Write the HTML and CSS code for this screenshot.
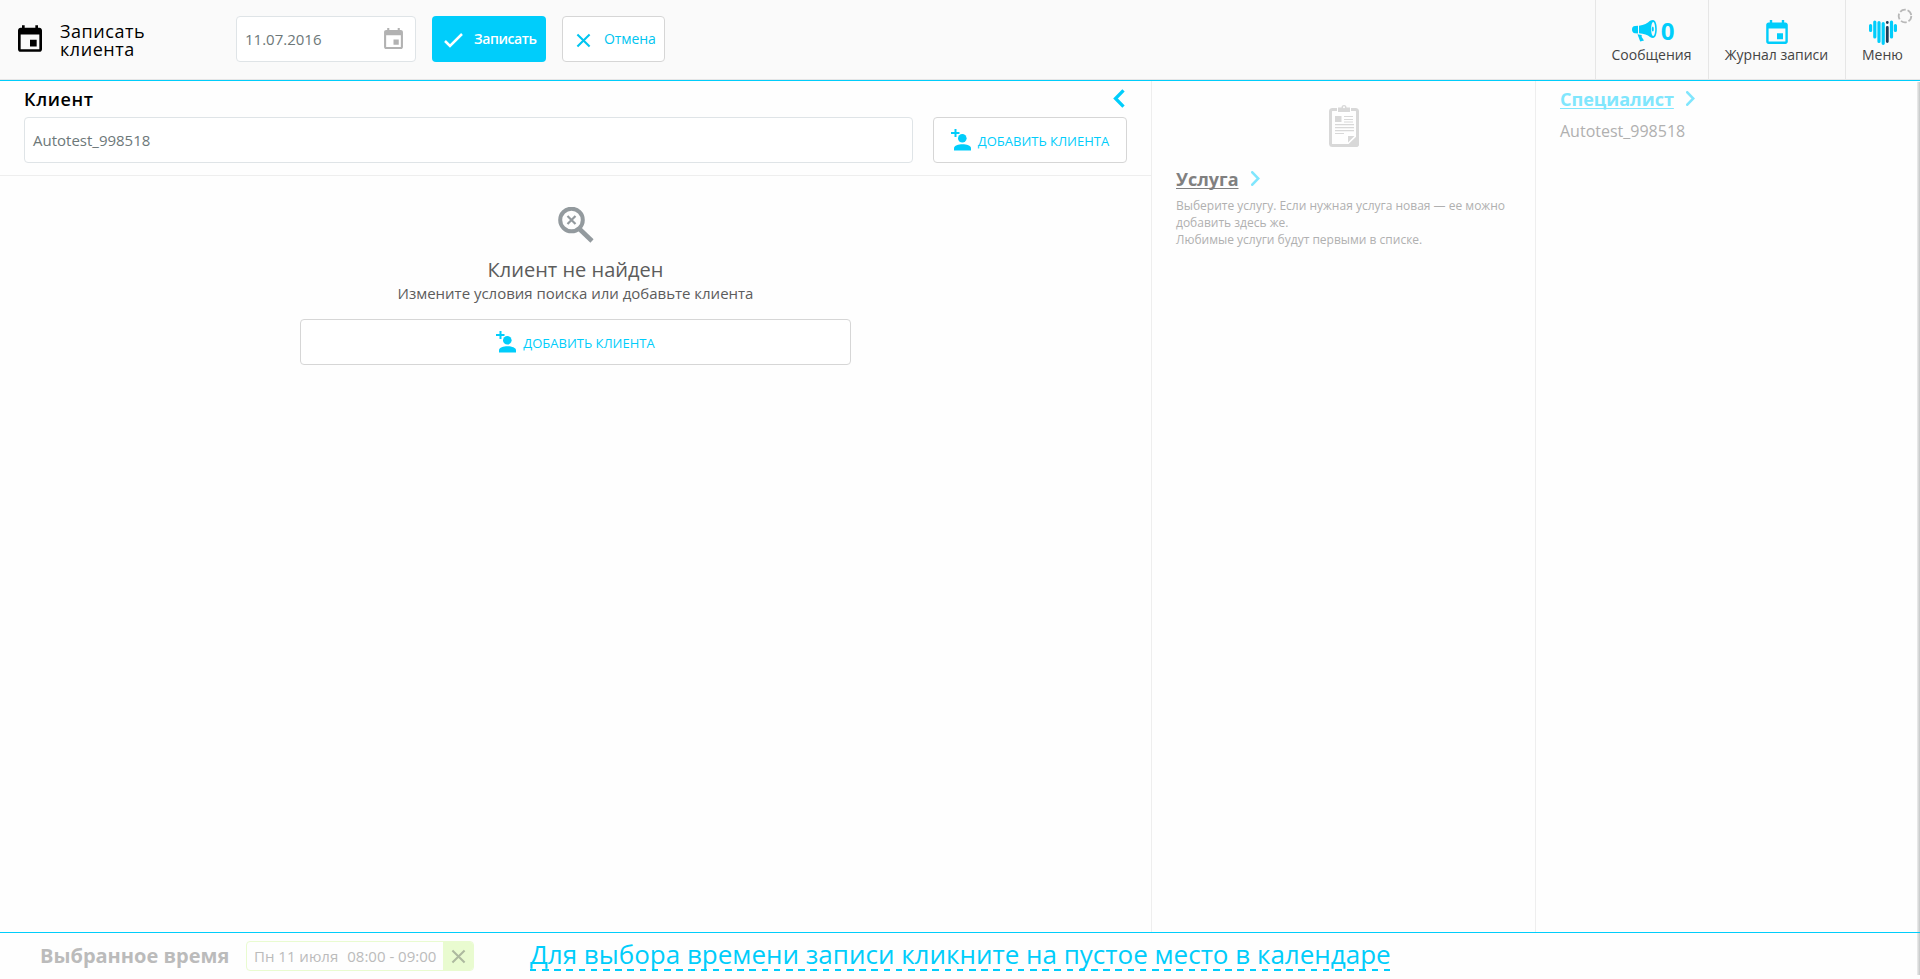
FILE: index.html
```html
<!DOCTYPE html>
<html lang="ru">
<head>
<meta charset="utf-8">
<title>Записать клиента</title>
<link rel="stylesheet" href="styles.css">
</head>
<body>
<svg class="sprite" width="0" height="0">
  <symbol id="event" viewBox="3 1 18 20"><path d="M17 12h-5v5h5v-5zM16 1v2H8V1H6v2H5c-1.110 0-1.990.9-1.990 2L3 19c0 1.100.89 2 2 2h14c1.100 0 2-.9 2-2V5c0-1.100-.9-2-2-2h-1V1h-2zm3 18H5V8h14v11z"/></symbol>
  <symbol id="person-add" viewBox="0 0 20 22"><path d="M3.500 0h2v3h3v2h-3v3h-2V5H0V3h3.500z"/><circle cx="11.300" cy="9.300" r="4.300"/><path d="M3 21.500v-2.200c0-2.600 4.500-4 8.500-4s8.500 1.400 8.500 4v2.200z"/></symbol>
  <symbol id="chevron" viewBox="0 0 9 15"><path d="M1.300 1.300 7.300 7.500 1.300 13.700" fill="none" stroke="currentColor" stroke-width="2.600" stroke-linecap="round"/></symbol>
  <symbol id="cross" viewBox="0 0 16 16"><path d="M1.500 1.500 14.500 14.500M14.500 1.500 1.500 14.500" fill="none" stroke="currentColor" stroke-width="2.200"/></symbol>
</svg>
<div class="page">
  <header class="header">
    <svg class="title-icon"><use href="#event"/></svg>
    <h1 class="title">Записать<br>клиента</h1>
    <div class="date"><span>11.07.2016</span><svg class="date-icon"><use href="#event"/></svg></div>
    <button class="btn save"><svg width="19" height="15" viewBox="0 0 19 15"><path d="M1 8l5 5L18 1" fill="none" stroke="#fff" stroke-width="2.500"/></svg><span>Записать</span></button>
    <button class="btn cancel"><svg width="15" height="15"><use href="#cross"/></svg><span>Отмена</span></button>
    <nav class="nav">
      <a class="nav-item messages"><span class="nav-icon">
        <svg width="25" height="22" viewBox="0 0 25 22"><path fill-rule="evenodd" d="M0 9.500C0 7.500 1 6 3 6l3-.2v7.600l-3-.2c-2 0-3-1.700-3-3.700zM7 5.700C12 5 15.500 3.500 18 .8 19 .2 20 0 21 0c2.500 0 3.800 4 3.800 9s-1.300 9-3.800 9c-1 0-2-.3-3-1-2.500-2-6-3.300-11-3.700zM21.200 2c-1.100 0-2 3-2 7s.9 7 2 7 2-3 2-7-.9-7-2-7zM5.500 14.300l4.200.6v2l2.300 3.600-3.800 1z"/><ellipse cx="20.800" cy="9" rx="1" ry="2.500"/></svg>
        <b class="count">0</b></span><span>Сообщения</span></a>
      <a class="nav-item journal"><span class="nav-icon"><svg width="22" height="24"><use href="#event"/></svg></span><span>Журнал записи</span></a>
      <a class="nav-item menu"><span class="nav-icon"><svg width="28" height="25" viewBox="0 0 28 25" fill="none" stroke="#00cdfb" stroke-width="3.200" stroke-linecap="round"><path d="M1.600 5.500v5M5.800 2v15M10 2.500v19M14.200 3.500v19.800M22.500 2v15M26.400 5.500v5"/><path d="M18.300 7.500v14M18.300 2.400v.1" stroke="#1d3b57" stroke-width="2.800"/></svg></span><span>Меню</span>
        <svg class="spinner" viewBox="0 0 16 16"><circle cx="8" cy="8" r="6.300"/></svg></a>
    </nav>
  </header>
  <main class="main">
    <section class="client">
      <div class="search">
        <div class="search-head"><h2 class="heading">Клиент</h2>
          <svg class="back" viewBox="0 0 12 19"><path d="M10.500 1.300 2.500 9.500l8 8.200" fill="none" stroke="currentColor" stroke-width="3.300"/></svg></div>
        <div class="search-row"><div class="field">Autotest_998518</div>
          <button class="add"><svg width="20" height="22"><use href="#person-add"/></svg><span>ДОБАВИТЬ КЛИЕНТА</span></button></div>
      </div>
      <div class="empty">
        <svg class="empty-icon" viewBox="0 0 36 36"><circle cx="13.500" cy="13" r="11.300" stroke-width="4"/><path d="M21.500 22 34 34" stroke-width="4.600"/><path d="M9.500 9l8 8m0-8-8 8" stroke-width="2.200"/></svg>
        <div class="empty-title">Клиент не найден</div>
        <div class="empty-text">Измените условия поиска или добавьте клиента</div>
        <button class="add wide"><svg width="20" height="22"><use href="#person-add"/></svg><span>ДОБАВИТЬ КЛИЕНТА</span></button>
      </div>
    </section>
    <section class="service">
      <svg class="clipboard" viewBox="0 0 30 42"><rect x="1.500" y="4.500" width="27" height="36" rx="2" fill="none" stroke="#d8d8d8" stroke-width="3"/><path d="M8 2h14v6H8z" fill="#fff"/><path d="M9 2.500h3.500a2.500 2.500 0 0 1 5 0H21V7H9z" fill="#d8d8d8"/><circle cx="15" cy="2.200" r="1" fill="#fff"/><path d="M6 11h6.500v6H6z" fill="#d8d8d8"/><path d="M15 11.500h9M15 14.500h9M15 17h9M6 19.700h19M6 22.700h19M6 25.700h19M6 28.500h9" fill="none" stroke="#d8d8d8" stroke-width="1.200"/><path d="M18 39v-9h9v9z" fill="#fff"/><path d="M19 31h6.500L19 37.500zM30 29v10q0 3-3 3h-9v-1.500z" fill="#d8d8d8"/></svg>
      <div class="step"><span class="step-name dark">Услуга</span><svg class="arrow"><use href="#chevron"/></svg></div>
      <p class="hint">Выберите услугу. Если нужная услуга новая — ее можно добавить здесь же.<br>Любимые услуги будут первыми в списке.</p>
    </section>
    <section class="specialist">
      <div class="step"><span class="step-name">Специалист</span><svg class="arrow"><use href="#chevron"/></svg></div>
      <div class="specialist-name">Autotest_998518</div>
    </section>
  </main>
  <footer class="footer">
    <b class="chosen">Выбранное время</b>
    <div class="slot"><span class="slot-text"><span>Пн 11 июля</span><span>08:00 - 09:00</span></span><span class="slot-close"><svg width="15" height="15"><use href="#cross"/></svg></span></div>
    <a class="pick">Для выбора времени записи кликните на пустое место в календаре</a>
  </footer>
  <div class="side-shadow"></div>
</div>
</body>
</html>
```
FILE: styles.css
```css
* { box-sizing: border-box; }
body { margin: 0; background: #fefefe; font-family: "Open Sans", sans-serif; color: #000; }
h1, h2, p { margin: 0; }
svg { fill: currentColor; flex: none; display: block; }
.sprite { position: absolute; }
button { font: inherit; cursor: pointer; }
.page { position: relative; width: 100%; height: 979px; display: flex; flex-direction: column; overflow: hidden; }

.header { height: 81px; flex: none; display: flex; align-items: flex-start; background: #fafafa; border-bottom: 1px solid #00cdfb; box-shadow: inset 0 -1px #e6e6e6; }
.title-icon { width: 24px; height: 27px; margin: 25px 0 0 18px; }
.title { margin: 22px 0 0 18px; width: 176px; font-size: 18px; line-height: 18px; font-weight: 400; letter-spacing: 0.55px; }
.date { width: 180px; height: 46px; margin-top: 16px; padding: 0 12px 0 8px; display: flex; align-items: center; justify-content: space-between; background: #fff; border: 1px solid #dfe4e7; border-radius: 4px; font-size: 15px; color: #6d7879; }
.date-icon { width: 19px; height: 21px; color: #b2b2b2; margin-top: -2px; }
.btn { height: 46px; margin: 16px 0 0 16px; padding: 0 0 0 12px; display: flex; align-items: center; border-radius: 4px; font-size: 14px; font-weight: 600; white-space: nowrap; }
.save { width: 114px; gap: 11px; background: #00cdfb; border: 0; color: #fff; letter-spacing: -0.4px; }
.cancel { width: 103px; padding-left: 13px; gap: 13px; background: #fff; border: 1px solid #d6d6d6; color: #00c5f0; font-weight: 500; letter-spacing: -0.1px; }
.btn svg { margin-top: 2px; }
.btn span { margin-top: -2px; }
.nav { margin-left: auto; height: 80px; display: flex; }
.nav-item { position: relative; display: flex; flex-direction: column; align-items: center; border-left: 1px solid #e6e6e6; padding-right: 1px; font-size: 14px; line-height: 20px; color: #444; }
.messages { width: 113px; }
.journal { width: 137px; }
.menu { width: 75px; }
.nav-icon { height: 45px; padding-top: 20px; display: flex; gap: 4px; color: #00cdfb; }
.messages .nav-icon { padding-left: 3px; }
.count { font-size: 24px; line-height: 22px; }
.spinner { position: absolute; right: 7px; top: 8px; width: 16px; height: 16px; fill: none; stroke: #b8b8b8; stroke-width: 1.800; stroke-dasharray: 6 1.900; }

.main { flex: 1; display: flex; min-height: 0; }
.client { width: 1152px; border-right: 1px solid #eee; }
.search { height: 95px; padding: 6px 24px 0; border-bottom: 1px solid #eee; }
.search-head { height: 30px; display: flex; justify-content: space-between; }
.heading { font-size: 18px; line-height: 25px; font-weight: 600; letter-spacing: 0.6px; }
.back { width: 12px; height: 19px; margin: 2px 2px 0 0; color: #00cdfb; }
.search-row { display: flex; gap: 20px; }
.field { flex: 1; height: 46px; padding: 0 8px; border: 1px solid #dfe4e7; border-radius: 4px; background: #fff; font-size: 15px; line-height: 45px; color: #6d7879; }
.add { width: 194px; height: 46px; padding: 0; display: flex; align-items: center; justify-content: center; gap: 7px; background: #fff; border: 1px solid #d6d6d6; border-radius: 4px; font-size: 13px; color: #00cdfb; }
.add svg { margin-top: -1px; }
.add span { margin-top: 1px; }
.empty { display: flex; flex-direction: column; align-items: center; padding-top: 31px; color: #5c5c5c; }
.empty-icon { width: 36px; height: 36px; fill: none; stroke: #939a9e; }
.empty-title { margin-top: 13px; font-size: 20px; line-height: 27px; }
.empty-text { font-size: 15px; line-height: 20px; letter-spacing: -0.02px; }
.add.wide { width: 551px; margin-top: 16px; }

.service { width: 384px; padding: 24px 24px 0; border-right: 1px solid #eee; }
.clipboard { width: 30px; height: 42px; margin: 0 auto 19px; }
.specialist { flex: 1; padding: 5px 24px 0; }
.step { display: flex; gap: 12px; height: 28px; line-height: 26px; }
.step-name { font-size: 18px; font-weight: 700; color: #80e6fd; text-decoration: underline; text-underline-offset: 2px; text-decoration-thickness: 1px; text-decoration-skip-ink: none; }
.dark { color: #808080; }
.arrow { width: 9px; height: 15px; margin-top: 5px; color: #80e6fd; }
.hint { margin-top: 3px; font-size: 12px; line-height: 17px; color: #b0b0b0; }
.specialist-name { margin-top: 6px; font-size: 16px; line-height: 22px; color: #b0b0b0; }

.footer { position: relative; z-index: 1; height: 47px; flex: none; display: flex; border-top: 1px solid #00cdfb; padding-left: 40px; }
.chosen { width: 206px; font-size: 20px; line-height: 45px; color: #bbb; }
.slot { width: 228px; height: 30px; margin-top: 8px; display: flex; border: 1px solid #e9fbd0; border-radius: 4px; overflow: hidden; font-size: 15px; line-height: 28px; color: #bbb; }
.slot-text { flex: 1; padding-left: 7px; display: flex; gap: 9px; white-space: nowrap; }
.slot-close { width: 30px; display: flex; align-items: center; justify-content: center; background: #e9fbd0; color: #adb99f; }
.pick { height: 38px; margin-left: 56px; font-size: 26px; line-height: 42px; color: #00cdfb; background: repeating-linear-gradient(90deg, #00cdfb 0 6.500px, transparent 6.500px 12.200px) bottom / 100% 2px no-repeat; white-space: nowrap; }
.side-shadow { position: absolute; right: 0; top: 82px; width: 3px; height: 893px; background: linear-gradient(90deg, #eee, #c4c7c7); }
```
